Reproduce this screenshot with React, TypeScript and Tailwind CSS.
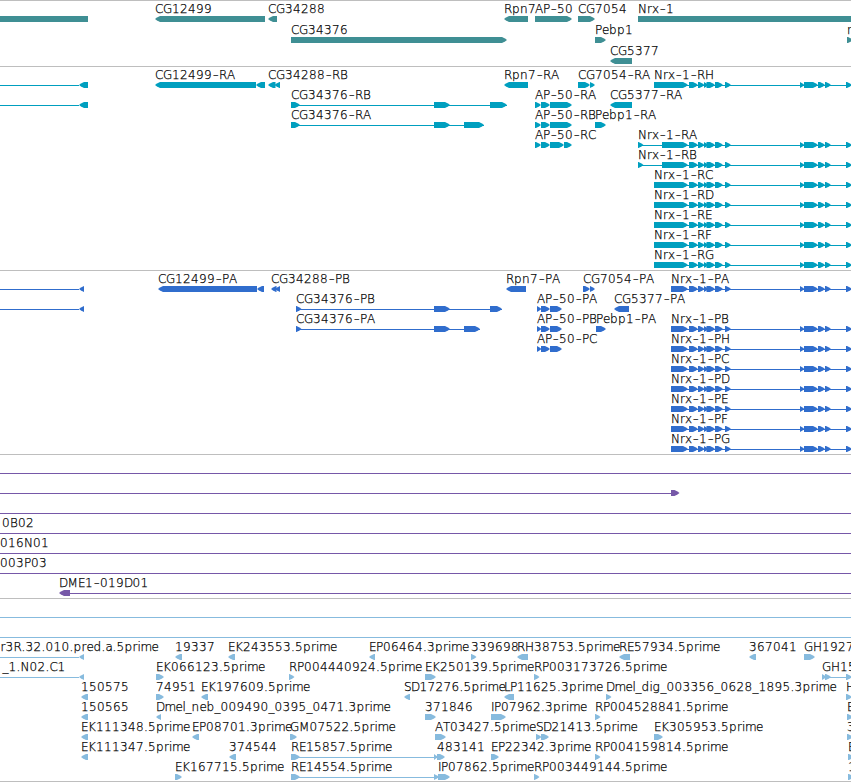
type Dir = "l" | "r";
type Exon = [start: number, end: number];
interface Feature {
  label?: string;
  dir: Dir;
  exons: Exon[];
  line?: [number, number];
  at?: number;
}

const f = (label: string, dir: Dir, ...exons: Exon[]): Feature => ({ label, dir, exons });
const spliced = (label: string, dir: Dir, line: [number, number], ...exons: Exon[]): Feature => ({
  label,
  dir,
  exons,
  line,
});
const bare = (line: [number, number]): Feature => ({ dir: "r", exons: [], line });
const text = (label: string, at: number): Feature => ({ label, at, dir: "r", exons: [] });

const END = 870;

const nrxTail: Exon[] = [
  [689, 698], [698, 704.5], [704, 708.5], [706.5, 715], [715, 723], [725, 731],
  [800, 804.5], [804, 818], [818, 825], [825, 831], [846, 852],
];
const nrx = (label: string, ...head: Exon[]): Feature =>
  spliced(label, "r", [head[0][0], END], ...head, ...nrxTail);

const genes: Feature[][] = [
  [
    { dir: "l", exons: [[-20, 88]] },
    f("CG12499", "l", [155, 265]),
    f("CG34288", "l", [268, 277]),
    f("Rpn7", "l", [504, 528]),
    f("AP-50", "r", [535, 572]),
    f("CG7054", "r", [578, 595]),
    f("Nrx-1", "r", [638, END]),
  ],
  [f("CG34376", "r", [291, 507]), f("Pebp1", "r", [595, 606]), f("r", "r", [847, 853])],
  [f("CG5377", "l", [610, 632])],
];

const transcripts: Feature[][] = [
  [
    { dir: "l", exons: [[79, 88]], line: [0, 79] },
    f("CG12499-RA", "l", [155, 256], [256, 265]),
    f("CG34288-RB", "l", [268, 275.5], [274.5, 280]),
    f("Rpn7-RA", "l", [504, 528]),
    f("CG7054-RA", "r", [578, 590], [590, 595]),
    nrx("Nrx-1-RH", [654, 688]),
  ],
  [
    { dir: "l", exons: [[79, 88]], line: [0, 79] },
    spliced("CG34376-RB", "r", [291, 507], [291, 300], [434, 450], [490, 507]),
    f("AP-50-RA", "r", [535, 541], [541, 550], [550, 572]),
    f("CG5377-RA", "l", [610, 632]),
  ],
  [
    spliced("CG34376-RA", "r", [291, 484], [291, 300], [434, 450], [464, 484]),
    f("AP-50-RB", "r", [535, 541], [541, 550], [550, 572]),
    f("Pebp1-RA", "r", [595, 606]),
  ],
  [
    f("AP-50-RC", "r", [535, 541], [541, 550], [550, 564], [564, 572]),
    nrx("Nrx-1-RA", [638, 643.5], [662, 688]),
  ],
  [nrx("Nrx-1-RB", [638, 643.5], [662, 688])],
  [nrx("Nrx-1-RC", [654, 688])],
  [nrx("Nrx-1-RD", [654, 688])],
  [nrx("Nrx-1-RE", [654, 688])],
  [nrx("Nrx-1-RF", [654, 688])],
  [nrx("Nrx-1-RG", [654, 688])],
];

const proteins: Feature[][] = [
  [
    { dir: "l", exons: [[79, 84]], line: [0, 79] },
    f("CG12499-PA", "l", [158, 257], [257, 264]),
    f("CG34288-PB", "l", [271, 276.5], [275, 280]),
    f("Rpn7-PA", "l", [506, 526]),
    f("CG7054-PA", "r", [583, 590], [590, 595]),
    nrx("Nrx-1-PA", [671, 688]),
  ],
  [
    { dir: "l", exons: [[79, 84]], line: [0, 79] },
    spliced("CG34376-PB", "r", [296, 502], [296, 301.5], [434, 450], [490, 502]),
    f("AP-50-PA", "r", [537, 541.5], [541, 550], [550, 562]),
    f("CG5377-PA", "l", [614, 629]),
  ],
  [
    spliced("CG34376-PA", "r", [296, 480], [296, 301.5], [434, 450], [464, 480]),
    f("AP-50-PB", "r", [537, 541.5], [541, 550], [550, 562]),
    f("Pebp1-PA", "r", [596, 606]),
    nrx("Nrx-1-PB", [671, 688]),
  ],
  [
    f("AP-50-PC", "r", [537, 541.5], [541, 550], [550, 562]),
    nrx("Nrx-1-PH", [671, 688]),
  ],
  [nrx("Nrx-1-PC", [671, 688])],
  [nrx("Nrx-1-PD", [671, 688])],
  [nrx("Nrx-1-PE", [671, 688])],
  [nrx("Nrx-1-PF", [671, 688])],
  [nrx("Nrx-1-PG", [671, 688])],
];

const clones: Feature[][] = [
  [bare([0, END])],
  [{ dir: "r", exons: [[671, 679.5]], line: [0, 671] }],
  [bare([0, END])],
  [bare([0, END]), text("0B02", 2)],
  [bare([0, END]), text("016N01", 0)],
  [bare([0, END]), text("003P03", 0)],
  [spliced("DME1-019D01", "l", [70, END], [59, 70])],
];

const ests: Feature[][] = [
  [bare([0, END])],
  [bare([0, END])],
  [
    { dir: "l", exons: [[79, 84]], line: [0, 79] },
    text("r3R.32.010.pred.a.5prime", 0.5),
    f("19337", "l", [175, 182]),
    f("EK243553.5prime", "l", [228, 235]),
    f("EP06464.3prime", "l", [369, 375]),
    f("339698", "r", [471, 476.5]),
    f("RH38753.5prime", "l", [517, 528]),
    f("RE57934.5prime", "l", [619, 630]),
    f("367041", "l", [749, 756]),
    f("GH1927", "r", [804, 815]),
  ],
  [
    { dir: "l", exons: [[79, 84]], line: [0, 79] },
    text("_1.N02.C1", 2.5),
    f("EK066123.5prime", "r", [156, 164]),
    f("RP004440924.5prime", "r", [289, 294.5]),
    f("EK250139.5prime", "r", [425, 436]),
    f("RP003173726.5prime", "r", [534, 539.5]),
    spliced("GH15", "r", [822, END], [822, 826.5], [825, 831], [846, 852]),
  ],
  [
    f("150575", "l", [81, 88]),
    f("74951", "r", [156, 164]),
    f("EK197609.5prime", "l", [201, 208]),
    f("SD17276.5prime", "l", [404, 410]),
    f("LP11625.3prime", "l", [504, 514]),
    f("Dmel_dig_003356_0628_1895.3prime", "r", [606, 611.5]),
    f("H", "r", [846, 852]),
  ],
  [
    f("150565", "l", [81, 88]),
    f("Dmel_neb_009490_0395_0471.3prime", "l", [156, 161]),
    f("371846", "r", [425, 436]),
    f("IP07962.3prime", "r", [491, 506]),
    f("RP004528841.5prime", "r", [595, 600.5]),
    f("E", "r", [847, 853]),
  ],
  [
    f("EK111348.5prime", "l", [81, 88]),
    f("EP08701.3prime", "l", [192, 199]),
    f("GM07522.5prime", "r", [290, 297]),
    f("AT03427.5prime", "r", [435, 446]),
    f("SD21413.5prime", "r", [536, 541.5], [541, 549]),
    f("EK305953.5prime", "r", [654, 663]),
    f("3", "r", [847, 853]),
  ],
  [
    f("EK111347.5prime", "l", [81, 88]),
    f("374544", "l", [229, 236]),
    spliced("RE15857.5prime", "r", [291, 437], [291, 300], [434, 438], [437, 445]),
    text("483141", 437),
    f("EP22342.3prime", "r", [491, 499]),
    f("RP004159814.5prime", "r", [595, 600.5]),
    f("E", "r", [848, 854]),
  ],
  [
    f("EK167715.5prime", "r", [175, 182]),
    spliced("RE14554.5prime", "r", [291, 438], [291, 300], [434, 439], [438, 450]),
    text("IP07862.5prime", 438),
    f("RP003449144.5prime", "r", [534, 539.5]),
    f("1", "r", [848, 854]),
  ],
];

const ADVANCE: Record<string, number> = {
  E: 7, F: 7, G: 9, H: 9, I: 3, L: 6, M: 10.5, N: 9, P: 7, S: 7, T: 7, D: 8.5,
  _: 6, ".": 4, "-": 7, a: 7, e: 7, i: 3, l: 3, m: 11, r: 5, x: 7,
};

/* Six-pixel-high box that narrows to a rounded point on its 3' side. */
function arrow([a, b]: Exon, dir: Dir) {
  const tip = Math.min(5, b - a);
  return dir === "r"
    ? `M${a} 14H${b - tip}L${b - 2} 15.5L${b} 17L${b - 2} 18.5L${b - tip} 20H${a}Z`
    : `M${b} 14H${a + tip}L${a + 2} 15.5L${a} 17L${a + 2} 18.5L${a + tip} 20H${b}Z`;
}

function Label({ value, left }: { value: string; left: number }) {
  let x = left;
  const parts = value.split(/(-)/).map((part) => {
    const xs = [...part].map((ch) => {
      const at = ch === "-" ? x + 0.4 : x;
      x += ADVANCE[ch] ?? 8;
      return at;
    });
    return { part, xs };
  });
  return (
    <text y={11} className="fill-black stroke-black [stroke-width:0.25px]">
      {parts.map(({ part, xs }, i) => (
        <tspan
          key={i}
          x={xs.join(" ")}
          y={part === "-" ? 12.3 : 11}
          className={part === "-" ? "text-[18px] [stroke-width:0px]" : "text-[12px]"}
        >
          {part}
        </tspan>
      ))}
    </text>
  );
}

function Row({ features, tall }: { features: Feature[]; tall?: boolean }) {
  return (
    <svg className={`block w-full overflow-visible ${tall ? "h-[21px]" : "h-5"}`} fill="currentColor">
      {features.map((ft, i) => (
        <g key={i}>
          {ft.line && <rect x={ft.line[0]} y={17} width={ft.line[1] - ft.line[0]} height={1} />}
          {ft.exons.map((e, j) => (
            <path key={j} d={arrow(e, ft.dir)} />
          ))}
          {ft.label && <Label value={ft.label} left={ft.at ?? ft.exons[0][0]} />}
        </g>
      ))}
    </svg>
  );
}

function Track({ rows, className, tall }: { rows: Feature[][]; className: string; tall?: boolean }) {
  return (
    <section className={`border-t border-[#bebebe] pt-px ${className}`}>
      {rows.map((r, i) => (
        <Row key={i} features={r} tall={tall} />
      ))}
    </section>
  );
}

export default function App() {
  return (
    <main className="h-[782px] w-[851px] overflow-hidden bg-white font-['DejaVu_Sans',sans-serif] text-[12px] font-extralight">
      <Track rows={genes} tall className="pb-px text-[#3f8f94]" />
      <Track rows={transcripts} className="pb-[2px] text-[#009fbf]" />
      <Track rows={proteins} className="pb-[2px] text-[#306dcd]" />
      <Track rows={clones} className="pb-[2px] text-[#7658a8]" />
      <Track rows={ests} className="border-b pb-px text-[#87bbde]" />
    </main>
  );
}
